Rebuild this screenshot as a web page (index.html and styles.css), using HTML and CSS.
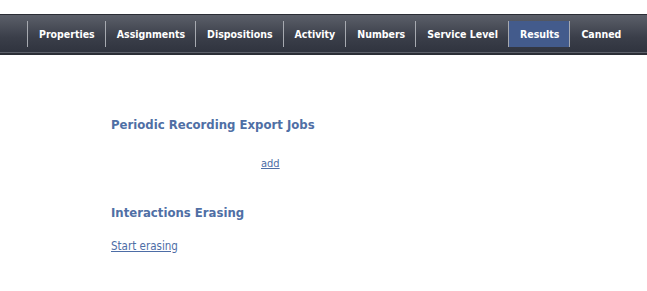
FILE: index.html
```html
<!DOCTYPE html>
<html lang="en">
<head>
    <meta charset="UTF-8">
    <meta name="viewport" content="width=device-width, initial-scale=1.0">
    <title>Results</title>
    <link rel="stylesheet" href="styles.css">
</head>
<body>

<div class="tabbar">
    <ul class="tabs">
        <li><a href="#">Properties</a></li>
        <li><a href="#">Assignments</a></li>
        <li><a href="#">Dispositions</a></li>
        <li><a href="#">Activity</a></li>
        <li><a href="#">Numbers</a></li>
        <li><a href="#">Service Level</a></li>
        <li class="active"><a href="#">Results</a></li>
        <li><a href="#">Canned</a></li>
    </ul>
</div>

<div class="content">
    <div class="section">
        <h2>Periodic Recording Export Jobs</h2>
        <div class="add-row"><a href="#">add</a></div>
    </div>

    <div class="section">
        <h2>Interactions Erasing</h2>
        <a href="#" class="small-link">Start erasing</a>
    </div>
</div>

</body>
</html>
```

FILE: styles.css
```css
/* base page */
body {
    margin: 0;
    background: #ffffff;
    font-family: "DejaVu Sans Condensed", "DejaVu Sans", sans-serif;
}

/* dark tab strip across the top */
.tabbar {
    margin-top: 14px;
    height: 38px;
    border-top: 1px solid #2a2d35;
    border-bottom: 2px solid #2b2e36;
    background: linear-gradient(#5b5f69, #3a3e49 60%, #2f333e);
    box-shadow: inset 0 -1px 0 #5c606a;
}

.tabs {
    list-style: none;
    margin: 0;
    padding: 6px 0 0 27px;
    display: flex;
}

.tabs li {
    border-left: 1px solid #a6a9b0;
    height: 26px;
}

.tabs li a {
    display: block;
    padding: 0 10px 0 11px;
    line-height: 26px;
    color: #ffffff;
    font-size: 10.5px;
    font-weight: bold;
    text-decoration: none;
    white-space: nowrap;
}

.tabs li.active {
    background: #435b8c;
}

/* page body */
.content {
    padding: 62px 0 0 111px;
}

.section h2 {
    margin: 0;
    font-size: 13px;
    color: #4f6fa5;
    line-height: 16px;
}

.section {
    margin-bottom: 35px;
}

.add-row {
    padding: 24px 0 0 150px;
    font-size: 11px;
}

.section a {
    color: #4d6da6;
}

.small-link {
    display: inline-block;
    margin-top: 18px;
    font-size: 11.5px;
}
```
